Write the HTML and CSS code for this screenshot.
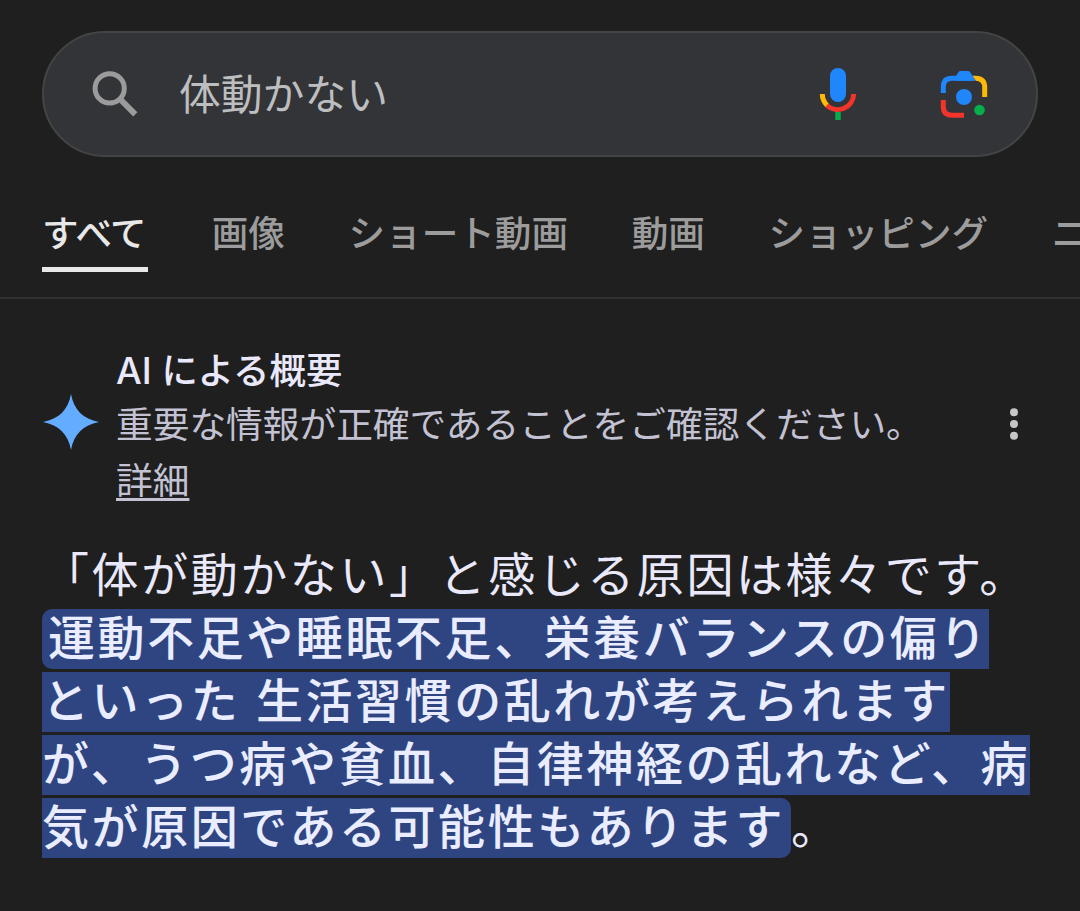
FILE: index.html
```html
<!DOCTYPE html>
<html lang="ja">

<head>
    <meta charset="UTF-8">
    <meta name="viewport" content="width=device-width, initial-scale=1.0">
    <title>体動かない</title>
    <link rel="stylesheet" href="styles.css">
</head>

<body>
    <header class="searchbar">
        <svg class="icon-search" viewBox="0 0 48 48">
            <circle cx="18.7" cy="18.4" r="14.6" fill="none" stroke="#9b9b9b" stroke-width="5" />
            <path d="M29.5 29.5L44.3 44.3" stroke="#9b9b9b" stroke-width="6" />
        </svg>
        <div class="query">体動かない</div>
        <svg class="icon-mic" viewBox="0 0 40 56">
            <rect x="12" y="2" width="16" height="34" rx="8" fill="#2086fc" />
            <path d="M4.3 28A15.9 15.9 0 0 0 9.2 39.4" fill="none" stroke="#fcb908" stroke-width="5" />
            <path d="M9 39.3A15.9 15.9 0 0 0 35.7 28" fill="none" stroke="#f3342b" stroke-width="5" />
            <rect x="17.3" y="46" width="5.4" height="8" fill="#06ae4b" />
        </svg>
        <svg class="icon-lens" viewBox="0 0 48 48">
            <path d="M3.3 23V17Q3.3 8.3 12 8.3H34" fill="none" stroke="#2086fc" stroke-width="5" />
            <path d="M15.5 7L18.5 2Q19.2 1 20.5 1H28Q29.3 1 30 2L35.5 10.8H15.5Z" fill="#2086fc" />
            <path d="M32.7 5.8H35.5Q47.2 5.8 47.2 17.5V27H42.2V17.5Q42.2 10.8 35.8 10.8Z" fill="#fcb908" />
            <path d="M3.3 30V36.5Q3.3 45.2 12 45.2H24" fill="none" stroke="#f3342b" stroke-width="5" />
            <circle cx="24" cy="27" r="8" fill="#2086fc" />
            <circle cx="39.5" cy="40" r="5.3" fill="#06ae4b" />
        </svg>
    </header>

    <nav class="tabs">
        <div class="tab active">すべて</div>
        <div class="tab">画像</div>
        <div class="tab">ショート動画</div>
        <div class="tab">動画</div>
        <div class="tab">ショッピング</div>
        <div class="tab">ニュース</div>
    </nav>

    <main class="overview">
        <div class="overview-head">
            <svg class="icon-spark" viewBox="0 0 56 56">
                <path d="M28 0C31 16 40 25 56 28C40 31 31 40 28 56C25 40 16 31 0 28C16 25 25 16 28 0Z" fill="#64acff" />
            </svg>
            <div class="overview-text">
                <div class="overview-title">AI による概要</div>
                <div class="overview-note">重要な情報が正確であることをご確認ください。<br><span class="more">詳細</span></div>
            </div>
            <svg class="icon-menu" viewBox="0 0 8 32">
                <circle cx="4" cy="4.2" r="4" />
                <circle cx="4" cy="16" r="4" />
                <circle cx="4" cy="27.8" r="4" />
            </svg>
        </div>

        <p class="answer">「体が動かない」と感じる原因は様々です。<br><mark class="highlight">運動不足や睡眠不足、栄養バランスの偏り<br>といった 生活習慣の乱れが考えられます<br>が、うつ病や貧血、自律神経の乱れなど、病<br>気が原因である可能性もあります</mark>。</p>
    </main>
</body>

</html>
```

FILE: styles.css
```css
* {
    box-sizing: border-box;
}

body {
    margin: 0;
    height: 911px;
    overflow: hidden;
    background-color: #1f1f1f;
    color: #e9e9fb;
    font-family: 'Liberation Sans', 'Noto Sans CJK JP', sans-serif;
    white-space: nowrap;
}

.searchbar {
    display: flex;
    align-items: center;
    width: 996px;
    height: 126px;
    margin: 31px 0 0 42px;
    padding: 0 48px 0 47px;
    background-color: #323437;
    border: 2px solid #434545;
    border-radius: 63px;
}

.icon-search {
    width: 48px;
    height: 48px;
    margin-right: 40px;
}

.query {
    flex: 1;
    padding-top: 4px;
    color: #bdbec0;
    font-size: 41.8px;
    line-height: 60px;
}

.icon-mic {
    width: 40px;
    height: 56px;
    margin-right: 82px;
}

.icon-lens {
    width: 48px;
    height: 48px;
}

.tabs {
    display: flex;
    gap: 63.7px;
    height: 142px;
    padding: 48px 0 0 42px;
    border-bottom: 2px solid #313131;
}

.tab {
    flex: none;
    height: 67px;
    padding-top: 1px;
    color: #9c9c9c;
    font-size: 36.6px;
    font-weight: 500;
    line-height: 58px;
}

.active {
    width: 106px;
    color: #e8e8e8;
    letter-spacing: -0.6px;
    border-bottom: 5px solid #e8e8e8;
}

.overview {
    padding: 45px 42px 0;
}

.overview-head {
    display: flex;
    align-items: flex-start;
}

.icon-spark {
    width: 56px;
    height: 56px;
    margin: 50px 17px 0 1px;
}

.overview-text {
    flex: 1;
}

.overview-title {
    font-family: 'Inter', 'Noto Sans CJK JP', sans-serif;
    font-size: 36.4px;
    font-weight: 500;
    line-height: 54px;
}

.overview-note {
    color: #c2c2d3;
    font-size: 36.7px;
    line-height: 56px;
}

.more {
    text-decoration: underline;
    text-decoration-thickness: 3px;
    text-decoration-skip-ink: none;
    text-underline-offset: 4px;
}

.icon-menu {
    width: 8px;
    height: 32px;
    margin: 64px 20px 0 0;
    fill: #c6c6c6;
}

.answer {
    margin: 34px 0 0;
    font-size: 47px;
    letter-spacing: 2.57px;
    line-height: 63px;
}

.highlight {
    padding: 3px 6px 4px;
    background-color: #2f4581;
    border-radius: 10px;
    color: #e9edff;
    font-weight: 500;
}
```
